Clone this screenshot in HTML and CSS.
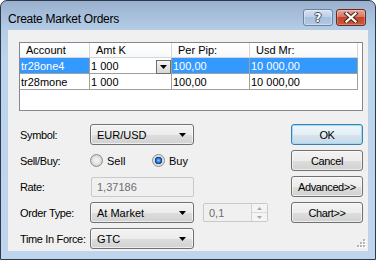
FILE: index.html
```html
<!DOCTYPE html>
<html>
<head>
<meta charset="utf-8">
<link rel="stylesheet" href="styles.css">
</head>
<body>
<div class="window">
  <div class="titlebar">
    <span class="title">Create Market Orders</span>
    <div class="caption">
      <div class="cap-btn cap-help"><span class="qmark">?</span></div>
      <div class="cap-btn cap-close">
        <svg width="16" height="11" viewBox="0 0 16 11"><path d="M3.5 1.5 L12.5 9.5 M12.5 1.5 L3.5 9.5" stroke="#4b2a22" stroke-width="4.2" stroke-linecap="square" fill="none"/><path d="M3.5 1.5 L12.5 9.5 M12.5 1.5 L3.5 9.5" stroke="#ffffff" stroke-width="2.2" stroke-linecap="square" fill="none"/></svg>
      </div>
    </div>
  </div>
  <div class="client">
    <div class="grid-box">
      <div class="grid">
        <div class="hd">Account</div><div class="hd">Amt K</div><div class="hd">Per Pip:</div><div class="hd last">Usd Mr:</div>
        <div class="cell sel">tr28one4</div><div class="cell edit">1 000<span class="ddbtn"><svg width="7" height="4" viewBox="0 0 7 4"><path d="M0 0H7L3.5 4Z" fill="#000"/></svg></span></div><div class="cell sel">100,00</div><div class="cell sel last">10 000,00</div>
        <div class="cell">tr28mone</div><div class="cell">1 000</div><div class="cell">100,00</div><div class="cell last">10 000,00</div>
      </div>
    </div>
    <div class="lower">
      <div class="fields">
        <span class="lbl">Symbol:</span>
        <div class="ctl"><div class="combo">EUR/USD<svg class="arrow" width="7" height="4" viewBox="0 0 7 4"><path d="M0 0H7L3.5 4Z" fill="#000"/></svg></div></div>
        <span class="lbl">Sell/Buy:</span>
        <div class="ctl"><div class="rgroup"><span class="radio"></span><span class="rtext">Sell</span></div><div class="rgroup"><span class="radio on"></span><span class="rtext">Buy</span></div></div>
        <span class="lbl">Rate:</span>
        <div class="ctl"><div class="tbox">1,37186</div></div>
        <span class="lbl">Order Type:</span>
        <div class="ctl"><div class="combo">At Market<svg class="arrow" width="7" height="4" viewBox="0 0 7 4"><path d="M0 0H7L3.5 4Z" fill="#000"/></svg></div>
          <div class="spin"><span class="spintext">0,1</span><div class="spinbtns"><span class="sb"><svg width="5" height="3" viewBox="0 0 5 3"><path d="M0 3H5L2.5 0Z" fill="#a7a7a7"/></svg></span><span class="sb"><svg width="5" height="3" viewBox="0 0 5 3"><path d="M0 0H5L2.5 3Z" fill="#a7a7a7"/></svg></span></div></div>
        </div>
        <span class="lbl">Time In Force:</span>
        <div class="ctl"><div class="combo">GTC<svg class="arrow" width="7" height="4" viewBox="0 0 7 4"><path d="M0 0H7L3.5 4Z" fill="#000"/></svg></div></div>
      </div>
      <div class="buttons">
        <div class="btn default">OK</div>
        <div class="btn">Cancel</div>
        <div class="btn">Advanced&gt;&gt;</div>
        <div class="btn">Chart&gt;&gt;</div>
      </div>
    </div>
    <svg class="grip" width="10" height="10" viewBox="0 0 10 10">
      <g fill="#ffffff"><rect x="8" y="1" width="2" height="2"/><rect x="5" y="4" width="2" height="2"/><rect x="8" y="4" width="2" height="2"/><rect x="2" y="7" width="2" height="2"/><rect x="5" y="7" width="2" height="2"/><rect x="8" y="7" width="2" height="2"/></g>
      <g fill="#b4b4b4"><rect x="7" y="0" width="2" height="2"/><rect x="4" y="3" width="2" height="2"/><rect x="7" y="3" width="2" height="2"/><rect x="1" y="6" width="2" height="2"/><rect x="4" y="6" width="2" height="2"/><rect x="7" y="6" width="2" height="2"/></g>
    </svg>
  </div>
</div>
</body>
</html>
```

FILE: styles.css
```css
html, body {
  margin: 0;
  padding: 0;
  background: #ffffff;
}

.window {
  width: 376px;
  height: 260px;
  box-sizing: border-box;
  border: 1px solid #2f3a48;
  border-radius: 7px 7px 0 0;
  background: linear-gradient(#99b1ce 0px, #b4cce6 28px, #bcd4ec 60px, #bed5ed 100%);
  padding: 0 7px 7px 7px;
  display: flex;
  flex-direction: column;
  font-family: "Liberation Sans", Arial, sans-serif;
}

.titlebar {
  height: 29px;
  display: flex;
  align-items: flex-start;
}

.title {
  font-size: 12px;
  letter-spacing: -0.25px;
  line-height: 16px;
  padding-top: 10px;
  color: #000;
}

.caption {
  margin-left: auto;
  margin-right: 2px;
  margin-top: 8px;
  display: flex;
  gap: 3px;
}

.cap-btn {
  width: 30px;
  height: 17px;
  box-sizing: border-box;
  border-radius: 3px;
  display: flex;
  align-items: center;
  justify-content: center;
}

.cap-help {
  border: 1px solid #6f819b;
  background: linear-gradient(#d3e2f3 0%, #bcd0e8 45%, #a9c0de 50%, #b2c9e4 100%);
  box-shadow: inset 0 0 0 1px rgba(255,255,255,0.35);
}

.qmark {
  font-family: "DejaVu Sans", sans-serif;
  font-weight: bold;
  font-size: 12px;
  line-height: 12px;
  color: #ffffff;
  text-shadow: 1px 0 0 #3e4e63, -1px 0 0 #3e4e63, 0 1px 0 #3e4e63, 0 -1px 0 #3e4e63;
}

.cap-close {
  border: 1px solid #6a2a1f;
  background: linear-gradient(#e5a89b 0%, #d47764 45%, #c5442b 50%, #cc5a3e 100%);
  box-shadow: inset 0 0 0 1px rgba(255,255,255,0.25);
}

.client {
  flex: 1;
  background: #f0f0f0;
  padding: 12px 5px 0 11px;
  position: relative;
  margin-bottom: 1px;
}

.grid-box {
  height: 69px;
  box-sizing: border-box;
  border: 1px solid #828790;
  background: #ffffff;
}

.grid {
  display: grid;
  grid-template-columns: 70px 82px 78px 108px;
  grid-template-rows: 15px 16px 16px;
  font-size: 11px;
  color: #000;
}

.hd {
  border-right: 1px solid #d5d5d5;
  border-bottom: 1px solid #d5d5d5;
  background: linear-gradient(#ffffff, #f7f8fa);
  padding-left: 6px;
  line-height: 15px;
  white-space: nowrap;
  box-shadow: inset -1px 0 0 #ffffff;
}

.cell {
  border-right: 1px solid #a0a0a0;
  border-bottom: 1px solid #a0a0a0;
  padding-left: 1px;
  line-height: 16px;
  white-space: nowrap;
  position: relative;
}

.cell.sel {
  background: #3399ff;
  color: #ffffff;
}

.cell.edit {
  background: #ffffff;
}

.ddbtn {
  position: absolute;
  right: 0;
  top: 2px;
  width: 15px;
  height: 14px;
  box-sizing: border-box;
  border: 1px solid #6f6f6f;
  background: linear-gradient(#f4f4f4, #d6d6d6);
  display: flex;
  align-items: center;
  justify-content: center;
}

.lower {
  margin-top: 13px;
  display: flex;
  justify-content: space-between;
}

.fields {
  display: grid;
  grid-template-columns: 70px auto;
  grid-auto-rows: 21px;
  row-gap: 5px;
  padding-left: 1px;
  font-size: 11px;
}

.lbl {
  display: flex;
  align-items: center;
  letter-spacing: -0.35px;
  white-space: nowrap;
  color: #000;
}

.ctl {
  display: flex;
  align-items: center;
}

.combo {
  width: 104px;
  height: 21px;
  box-sizing: border-box;
  border: 1px solid #707070;
  border-radius: 3px;
  background: linear-gradient(#f3f3f3 0%, #ececec 50%, #dedede 51%, #d1d1d1 100%);
  box-shadow: inset 0 0 0 1px rgba(255,255,255,0.6);
  padding-left: 6px;
  display: flex;
  align-items: center;
  position: relative;
  color: #000;
}

.combo .arrow {
  position: absolute;
  right: 7px;
  top: 8px;
}

.rgroup {
  display: flex;
  align-items: center;
}

.rgroup:first-child {
  width: 62px;
}

.radio {
  width: 13px;
  height: 13px;
  box-sizing: border-box;
  border-radius: 50%;
  border: 1px solid #8e8f8f;
  background: radial-gradient(circle at 50% 50%, #f4f4f4 0%, #e6e6e6 45%, #cfcfcf 70%, #f4f4f4 100%);
  margin-right: 4px;
}

.radio.on {
  background: radial-gradient(circle at 50% 50%, #9ad0ff 0px, #2b78d6 2px, #0b3d86 3.5px, #d8d8d8 4px, #f2f2f2 100%);
}

.rtext {
  color: #000;
}

.tbox {
  width: 103px;
  height: 20px;
  margin-left: 1px;
  box-sizing: border-box;
  border: 1px solid #c6c9cf;
  border-radius: 2px;
  background: #f0f0f0;
  color: #6d6d6d;
  padding-left: 5px;
  display: flex;
  align-items: center;
}

.spin {
  width: 65px;
  height: 19px;
  margin-left: 9px;
  box-sizing: border-box;
  border: 1px solid #c6c9cf;
  border-radius: 2px;
  background: #f0f0f0;
  color: #6d6d6d;
  display: flex;
  align-items: center;
}

.spintext {
  flex: 1;
  padding-left: 5px;
}

.spinbtns {
  width: 16px;
  height: 17px;
  display: flex;
  flex-direction: column;
  border-left: 1px solid #d2d2d2;
  box-sizing: border-box;
}

.sb {
  flex: 1;
  display: flex;
  align-items: center;
  justify-content: center;
  background: #f4f4f4;
  border-bottom: 1px solid #d9d9d9;
}

.sb:last-child {
  border-bottom: none;
}

.buttons {
  display: flex;
  flex-direction: column;
  gap: 5px;
  width: 72px;
}

.btn {
  height: 21px;
  box-sizing: border-box;
  border: 1px solid #707070;
  border-radius: 3px;
  background: linear-gradient(#f3f3f3 0%, #ececec 50%, #dedede 51%, #d1d1d1 100%);
  box-shadow: inset 0 0 0 1px rgba(255,255,255,0.6);
  font-size: 11px;
  letter-spacing: -0.4px;
  color: #000;
  display: flex;
  align-items: center;
  justify-content: center;
}

.btn.default {
  border-color: #3c7fb1;
  box-shadow: inset 0 0 0 1px #9fdcf6;
  background: linear-gradient(#eef6fb 0%, #e3eef5 50%, #d6e4ee 51%, #c8d8e5 100%);
}

.grip {
  position: absolute;
  right: 2px;
  bottom: 2px;
}
```
